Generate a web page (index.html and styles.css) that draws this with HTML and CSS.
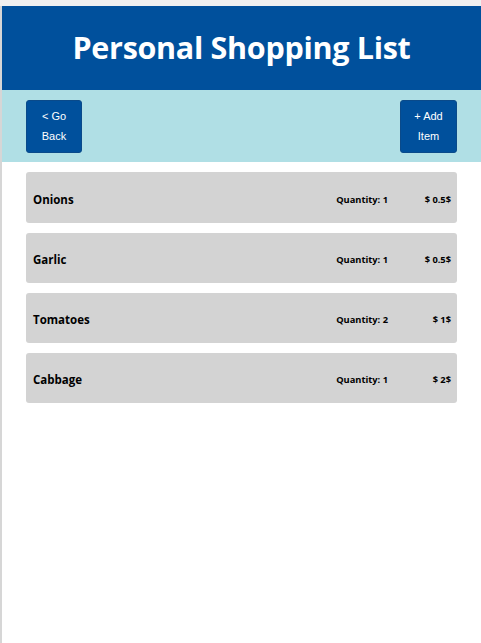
FILE: index.html
```html
<!DOCTYPE html>
<html>
<head>
<meta charset="utf-8">
<link rel="stylesheet" href="styles.css">
</head>
<body>
<div class="app">
  <header class="header">
    <h1 class="title">Personal Shopping List</h1>
  </header>
  <nav class="nav">
    <button class="btn">&lt; Go Back</button>
    <button class="btn">+ Add Item</button>
  </nav>
  <main class="list">
    <div class="item"><span class="name">Onions</span><span class="qty">Quantity: 1</span><span class="price">$ 0.5$</span></div>
    <div class="item"><span class="name">Garlic</span><span class="qty">Quantity: 1</span><span class="price">$ 0.5$</span></div>
    <div class="item"><span class="name">Tomatoes</span><span class="qty">Quantity: 2</span><span class="price">$ 1$</span></div>
    <div class="item"><span class="name">Cabbage</span><span class="qty">Quantity: 1</span><span class="price">$ 2$</span></div>
  </main>
</div>
</body>
</html>
```
FILE: styles.css
```css
html, body {
  margin: 0;
  padding: 0;
  height: 100%;
}
body {
  background: #f0f0f0;
  padding-top: 6px;
  box-sizing: border-box;
  font-family: "Open Sans", "Noto Sans", sans-serif;
}
.app {
  background: #ffffff;
  border-left: 2px solid #d6d6d6;
  min-height: 637px;
  box-sizing: border-box;
}
.header {
  background: #00509c;
  height: 84px;
  display: flex;
  align-items: center;
  justify-content: center;
}
.title {
  margin: 0 0 2px;
  color: #ffffff;
  font-size: 30.5px;
  font-weight: 700;
  letter-spacing: -0.3px;
}
.nav {
  background: #b0dfe5;
  height: 72px;
  padding: 10px 24px 0;
  box-sizing: border-box;
  display: flex;
  justify-content: space-between;
  align-items: flex-start;
}
.btn {
  width: 56px;
  height: 53px;
  padding: 0 12px 1px;
  border: 1px solid #0a4a8a;
  border-radius: 3px;
  background: #00509c;
  color: #ffffff;
  font-family: "Liberation Sans", Arial, sans-serif;
  font-size: 11px;
  line-height: 20px;
  text-align: center;
}
.btn:last-child {
  width: 57px;
}
.list {
  padding: 10px 24px;
  display: flex;
  flex-direction: column;
  gap: 10px;
}
.item {
  height: 51px;
  background: #d3d3d3;
  border-radius: 3px;
  display: grid;
  grid-template-columns: 1fr auto 63px;
  align-items: center;
  padding: 3px 6px 0 7px;
  box-sizing: border-box;
  color: #000000;
  font-weight: 700;
}
.item + .item {
  height: 50px;
}
.name {
  font-size: 11.5px;
}
.qty, .price {
  font-size: 9.3px;
}
.price {
  text-align: right;
}
```
